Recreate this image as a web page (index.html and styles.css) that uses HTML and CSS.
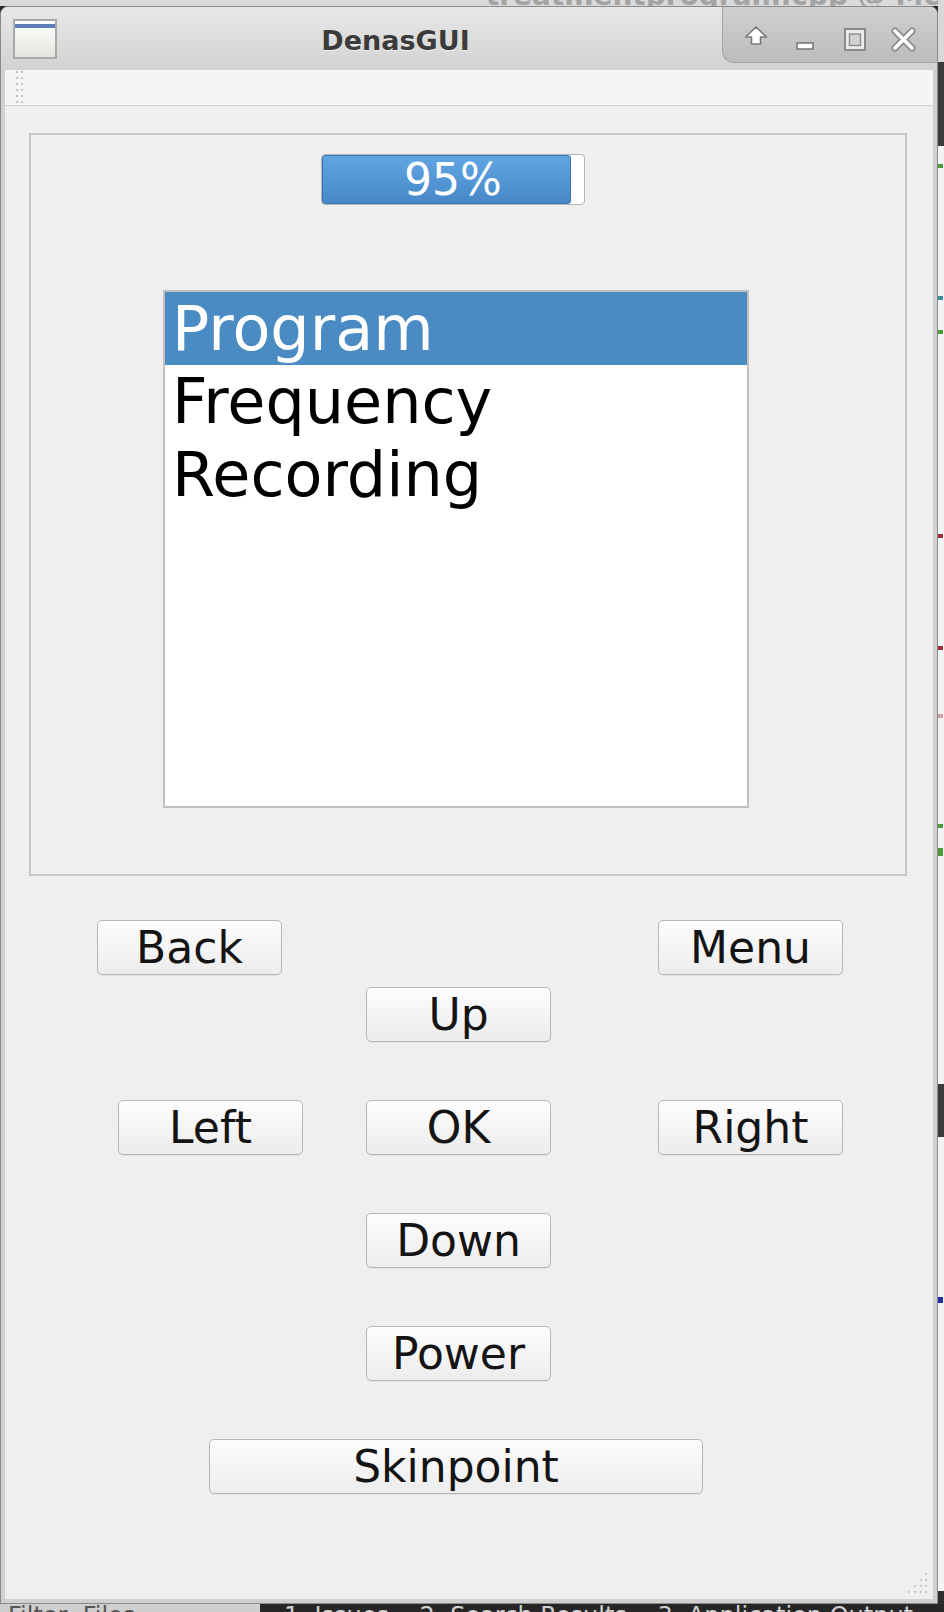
FILE: index.html
```html
<!DOCTYPE html>
<html>
<head>
<meta charset="utf-8">
<title>DenasGUI</title>
<link rel="stylesheet" href="styles.css">
</head>
<body>
<div class="desk">
  <div class="top-strip"><span class="behind-title">treatmentprogram.cpp @ Mc</span></div>
  <div class="middle">
    <div class="window">
      <div class="titlebar">
        <div class="app-icon"><div class="app-icon-stripe"></div></div>
        <div class="title">DenasGUI</div>
        <div class="controls">
          <svg width="215" height="56" viewBox="0 0 215 56">
            <path d="M33 20 L43.5 30 L37.5 30 L37.5 37 L28.5 37 L28.5 30 L22.5 30 Z" fill="#ffffff" stroke="#7a7a7a" stroke-width="1.6" stroke-linejoin="round"/>
            <rect x="74" y="36" width="16" height="6" fill="#ffffff" stroke="#7a7a7a" stroke-width="1.6"/>
            <rect x="122" y="22" width="20" height="21" fill="#ececec" stroke="#8a8a8a" stroke-width="2"/>
            <rect x="126.5" y="27" width="11" height="11.5" fill="#d2d2d2" stroke="#8a8a8a" stroke-width="1.4"/>
            <path d="M172 24 L189 41 M189 24 L172 41" stroke="#8c8c8c" stroke-width="7" stroke-linecap="round"/>
            <path d="M172 24 L189 41 M189 24 L172 41" stroke="#ffffff" stroke-width="3.6" stroke-linecap="round"/>
          </svg>
        </div>
      </div>
      <div class="frame">
        <div class="toolbar">
          <svg class="grip" width="12" height="36" viewBox="0 0 12 36">
            <g fill="#c4c4c4">
              <rect x="1" y="1" width="2" height="2"/><rect x="6" y="1" width="2" height="2"/>
              <rect x="1" y="7" width="2" height="2"/><rect x="6" y="7" width="2" height="2"/>
              <rect x="1" y="13" width="2" height="2"/><rect x="6" y="13" width="2" height="2"/>
              <rect x="1" y="19" width="2" height="2"/><rect x="6" y="19" width="2" height="2"/>
              <rect x="1" y="25" width="2" height="2"/><rect x="6" y="25" width="2" height="2"/>
              <rect x="1" y="31" width="2" height="2"/><rect x="6" y="31" width="2" height="2"/>
            </g>
          </svg>
        </div>
        <div class="central">
          <div class="groupbox">
            <div class="progress">
              <div class="progress-fill" style="width: 95%"></div>
              <div class="progress-text">95%</div>
            </div>
            <div class="listbox">
              <div class="item selected">Program</div>
              <div class="item">Frequency</div>
              <div class="item">Recording</div>
            </div>
          </div>
          <div class="row row-1">
            <button class="btn">Back</button>
            <button class="btn btn-menu">Menu</button>
          </div>
          <div class="row row-2 center-col">
            <button class="btn">Up</button>
          </div>
          <div class="row row-3">
            <button class="btn">Left</button>
            <button class="btn btn-ok">OK</button>
            <button class="btn btn-right">Right</button>
          </div>
          <div class="row row-4 center-col">
            <button class="btn">Down</button>
          </div>
          <div class="row row-5 center-col">
            <button class="btn">Power</button>
          </div>
          <div class="row row-6">
            <button class="btn btn-wide">Skinpoint</button>
          </div>
          <svg class="size-grip" width="28" height="28" viewBox="0 0 28 28">
            <g fill="#c8c8c8">
              <rect x="22" y="4" width="2" height="2"/>
              <rect x="17" y="10" width="2" height="2"/><rect x="22" y="10" width="2" height="2"/>
              <rect x="11" y="16" width="2" height="2"/><rect x="17" y="16" width="2" height="2"/><rect x="22" y="16" width="2" height="2"/>
              <rect x="5" y="22" width="2" height="2"/><rect x="11" y="22" width="2" height="2"/><rect x="17" y="22" width="2" height="2"/><rect x="22" y="22" width="2" height="2"/>
            </g>
          </svg>
        </div>
      </div>
    </div>
    <div class="side-strip">
      <div class="seg seg-light-top"></div>
      <div class="seg seg-dark-a"></div>
      <div class="seg seg-light">
        <span class="mark m-green m1"></span>
        <span class="mark m-teal m2"></span>
        <span class="mark m-green m3"></span>
        <span class="mark m-red m4"></span>
        <span class="mark m-red m5"></span>
        <span class="mark m-pink m6"></span>
        <span class="mark m-green m7"></span>
        <span class="mark m-green m8"></span>
      </div>
      <div class="seg seg-dark-b"></div>
      <div class="seg seg-light-2">
        <span class="mark m-blue m9"></span>
      </div>
      <div class="seg seg-dark-c"></div>
    </div>
  </div>
  <div class="bottom-strip">
    <div class="bs-left"><span>Filter&nbsp;&nbsp;Files</span></div>
    <div class="bs-right"><span>1&nbsp;&nbsp;Issues&nbsp;&nbsp;&nbsp;&nbsp;2&nbsp;&nbsp;Search Results&nbsp;&nbsp;&nbsp;&nbsp;3&nbsp;&nbsp;Application Output</span></div>
  </div>
</div>
</body>
</html>
```

FILE: styles.css
```css
* {
  box-sizing: border-box;
}

html, body {
  margin: 0;
  padding: 0;
}

body {
  width: 944px;
  height: 1612px;
  overflow: hidden;
  background: #2a2a2a;
  font-family: "DejaVu Sans", "Liberation Sans", sans-serif;
}

.desk {
  display: flex;
  flex-direction: column;
  width: 944px;
  height: 1612px;
}

/* strip of desktop visible above the window */
.top-strip {
  height: 6px;
  background: #dadada;
  overflow: hidden;
  display: flex;
  justify-content: flex-end;
  align-items: flex-end;
  padding-right: 4px;
}

.behind-title {
  font-size: 28px;
  line-height: 20px;
  font-weight: bold;
  color: #a4a4a4;
  white-space: nowrap;
}

.middle {
  display: flex;
  height: 1598px;
}

/* ---------- window ---------- */
.window {
  width: 938px;
  height: 1598px;
  border: 1px solid #8a8a8a;
  border-radius: 8px 8px 0 0;
  background: #d0d0d0;
  overflow: hidden;
  display: flex;
  flex-direction: column;
}

.titlebar {
  height: 63px;
  flex: none;
  display: flex;
  background: linear-gradient(#e8e8e8, #d2d2d2);
}

.app-icon {
  width: 44px;
  height: 40px;
  margin: 12px 0 0 12px;
  border: 2px solid #a9a9a9;
  background: linear-gradient(#ffffff, #e2e6de);
  flex: none;
}

.app-icon-stripe {
  height: 4px;
  margin-top: 3px;
  background: #5d7fb5;
}

.title {
  flex: 1;
  text-align: center;
  font-size: 27px;
  font-weight: bold;
  color: #3b3b3b;
  line-height: 30px;
  padding-top: 19px;
  padding-left: 12px;
  text-shadow: 0 1px 0 rgba(255, 255, 255, 0.6);
}

.controls {
  width: 215px;
  height: 56px;
  flex: none;
  background: linear-gradient(#d0d0d0, #bcbcbc);
  border-left: 1px solid #a4a4a4;
  border-bottom: 1px solid #a4a4a4;
  border-bottom-left-radius: 12px;
}

.controls svg {
  display: block;
}

.frame {
  flex: 1;
  margin: 0 4px 4px 4px;
  display: flex;
  flex-direction: column;
  background: #efefef;
}

.toolbar {
  height: 36px;
  flex: none;
  background: #f5f5f5;
  border-bottom: 1px solid #d2d2d2;
  padding: 0 0 0 10px;
}

.grip {
  display: block;
}

.central {
  flex: 1;
  position: relative;
  background: #efefef;
  padding: 27px 0 0 24px;
}

/* ---------- group box ---------- */
.groupbox {
  width: 878px;
  height: 743px;
  border: 2px solid #c6c6c6;
  padding: 19px 0 0 290px;
}

.progress {
  width: 264px;
  height: 51px;
  border: 1px solid #b4b4b4;
  border-radius: 4px;
  background: #ffffff;
  display: grid;
}

.progress-fill {
  grid-area: 1 / 1;
  height: 49px;
  background: linear-gradient(#60a6e3, #4788c8);
  border: 1px solid #3c76ae;
  border-radius: 3px;
}

.progress-text {
  grid-area: 1 / 1;
  text-align: center;
  color: #ffffff;
  font-size: 44px;
  line-height: 49px;
}

.listbox {
  width: 586px;
  height: 518px;
  margin: 85px 0 0 -158px;
  background: #ffffff;
  border: 2px solid #c0c0c0;
}

.item {
  height: 73px;
  font-size: 62px;
  line-height: 73px;
  padding-left: 7px;
  color: #000000;
  white-space: nowrap;
}

.item.selected {
  background: #4b8bc3;
  color: #ffffff;
}

/* ---------- buttons ---------- */
.row {
  display: flex;
}

.row-1 { margin-top: 44px; padding-left: 68px; }
.row-2 { margin-top: 12px; }
.row-3 { margin-top: 58px; padding-left: 89px; }
.row-4 { margin-top: 58px; }
.row-5 { margin-top: 58px; }
.row-6 { margin-top: 58px; padding-left: 180px; }

.center-col { padding-left: 337px; }

.btn {
  width: 185px;
  height: 55px;
  padding: 0;
  margin: 0;
  border: 1px solid #b6b6b6;
  border-radius: 5px;
  background: linear-gradient(#fdfdfd, #ececec);
  box-shadow: 0 1px 0 rgba(0, 0, 0, 0.05);
  font-family: "DejaVu Sans", "Liberation Sans", sans-serif;
  font-size: 44px;
  line-height: 52px;
  color: #141414;
  text-align: center;
}

.btn-menu { margin-left: 376px; }
.btn-ok { margin-left: 63px; }
.btn-right { margin-left: 107px; }
.btn-wide { width: 494px; }

.size-grip {
  position: absolute;
  right: 2px;
  bottom: 2px;
}

/* ---------- desktop remnants ---------- */
.side-strip {
  width: 6px;
  display: flex;
  flex-direction: column;
}

.seg { flex: none; }
.seg-light-top { height: 56px; background: #d8d8d8; }
.seg-dark-a { height: 84px; background: #3a3a3a; }
.seg-light { height: 938px; background: #f4f4f4; display: flex; flex-direction: column; }
.seg-dark-b { height: 53px; background: #3c3c3c; }
.seg-light-2 { height: 454px; background: #f4f4f4; display: flex; flex-direction: column; }
.seg-dark-c { flex: 1; background: #2e2e2e; }

.mark { display: block; height: 4px; width: 5px; }
.m-green { background: #4f9a3c; }
.m-teal { background: #3e8aa0; }
.m-red { background: #9c2f2f; }
.m-pink { background: #cfa2a8; }
.m-blue { background: #2230a8; }
.m1 { margin-top: 18px; }
.m2 { margin-top: 128px; }
.m3 { margin-top: 30px; }
.m4 { margin-top: 200px; }
.m5 { margin-top: 108px; }
.m6 { margin-top: 64px; }
.m7 { margin-top: 106px; }
.m8 { margin-top: 20px; height: 8px; }
.m9 { margin-top: 160px; height: 6px; }

.bottom-strip {
  height: 8px;
  display: flex;
  overflow: hidden;
}

.bs-left {
  width: 260px;
  background: #cfcfcf;
  color: #555555;
  font-size: 24px;
  line-height: 24px;
  padding-left: 8px;
  overflow: hidden;
  white-space: nowrap;
}

.bs-right {
  flex: 1;
  background: #262626;
  color: #cfcfcf;
  font-size: 24px;
  line-height: 24px;
  padding-left: 24px;
  overflow: hidden;
  white-space: nowrap;
}
```
